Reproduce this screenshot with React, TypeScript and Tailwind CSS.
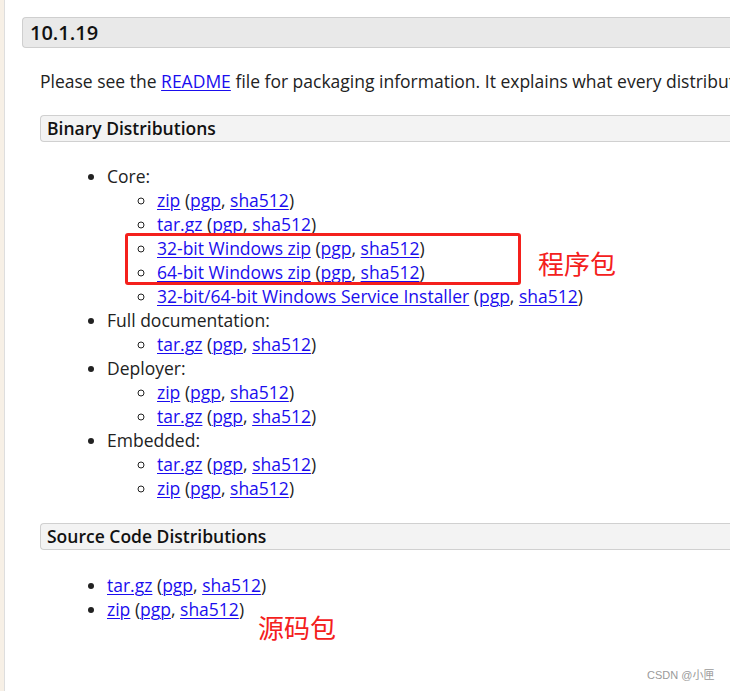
const A = ({ children }: { children: React.ReactNode }) => (
  <a href="#" className="text-[#1a0dee] underline underline-offset-2 decoration-1">
    {children}
  </a>
);

const Sig = () => (
  <>
    {" "}(<A>pgp</A>, <A>sha512</A>)
  </>
);

const Sub = ({ items }: { items: string[] }) => (
  <ul className="list-[circle] pl-[50px]">
    {items.map((t, i) => (
      <li key={i} className="pl-0">
        <A>{t}</A>
        <Sig />
      </li>
    ))}
  </ul>
);

export default function App() {
  return (
    <div className="relative w-[730px] h-[691px] overflow-hidden bg-white flex font-['Open_Sans',sans-serif] text-[17.5px] leading-[24px] text-[#222]">
      <div className="w-[5px] shrink-0 bg-[#f7f0e6] border-r border-[#dedede]" />
      <div className="flex-1 pt-[17px]">
        <div className="ml-[17px] w-[800px] h-[31px] rounded-l-[4px] border border-r-0 border-[#cfcfcf] bg-[#e9e9e9] pl-[7px] text-[20px] font-semibold leading-[29px] text-[#111]">
          10.1.19
        </div>
        <div className="ml-[35px]">
          <p className="mt-[21px] whitespace-nowrap">
            Please see the <A>README</A> file for packaging information. It explains what every distribution contains.
          </p>

          <div className="mt-[22px] w-[800px] h-[27px] rounded-l-[4px] border border-r-0 border-[#d0d0d0] bg-[#f3f3f3] pl-[6px] font-semibold leading-[25px] text-[#111]">
            Binary Distributions
          </div>

          <ul className="list-disc pl-[67px] mt-[22px]">
            <li>
              Core:
              <Sub items={["zip", "tar.gz", "32-bit Windows zip", "64-bit Windows zip", "32-bit/64-bit Windows Service Installer"]} />
            </li>
            <li>
              Full documentation:
              <Sub items={["tar.gz"]} />
            </li>
            <li>
              Deployer:
              <Sub items={["zip", "tar.gz"]} />
            </li>
            <li>
              Embedded:
              <Sub items={["tar.gz", "zip"]} />
            </li>
          </ul>

          <div className="mt-[23px] w-[800px] h-[27px] rounded-l-[4px] border border-r-0 border-[#d0d0d0] bg-[#f3f3f3] pl-[6px] font-semibold leading-[25px] text-[#111]">
            Source Code Distributions
          </div>

          <ul className="list-disc pl-[67px] mt-[23px]">
            <li>
              <A>tar.gz</A>
              <Sig />
            </li>
            <li>
              <A>zip</A>
              <Sig />
            </li>
          </ul>
        </div>
      </div>

      <div className="absolute left-[125px] top-[233px] w-[396px] h-[52px] rounded-[3px] border-[3px] border-[#f4201c]" />
      <div className="absolute left-[538px] top-[246px] text-[26px] leading-[34px] text-[#f4201c] font-['Noto_Sans_CJK_SC',sans-serif]">
        程序包
      </div>
      <div className="absolute left-[258px] top-[610px] text-[26px] leading-[34px] text-[#f4201c] font-['Noto_Sans_CJK_SC',sans-serif]">
        源码包
      </div>
      <div className="absolute left-[647px] top-[667px] text-[11px] leading-[16px] text-[#9a9a9a] font-['Liberation_Sans','Noto_Sans_CJK_SC',sans-serif]">
        CSDN @小匣
      </div>
    </div>
  );
}
